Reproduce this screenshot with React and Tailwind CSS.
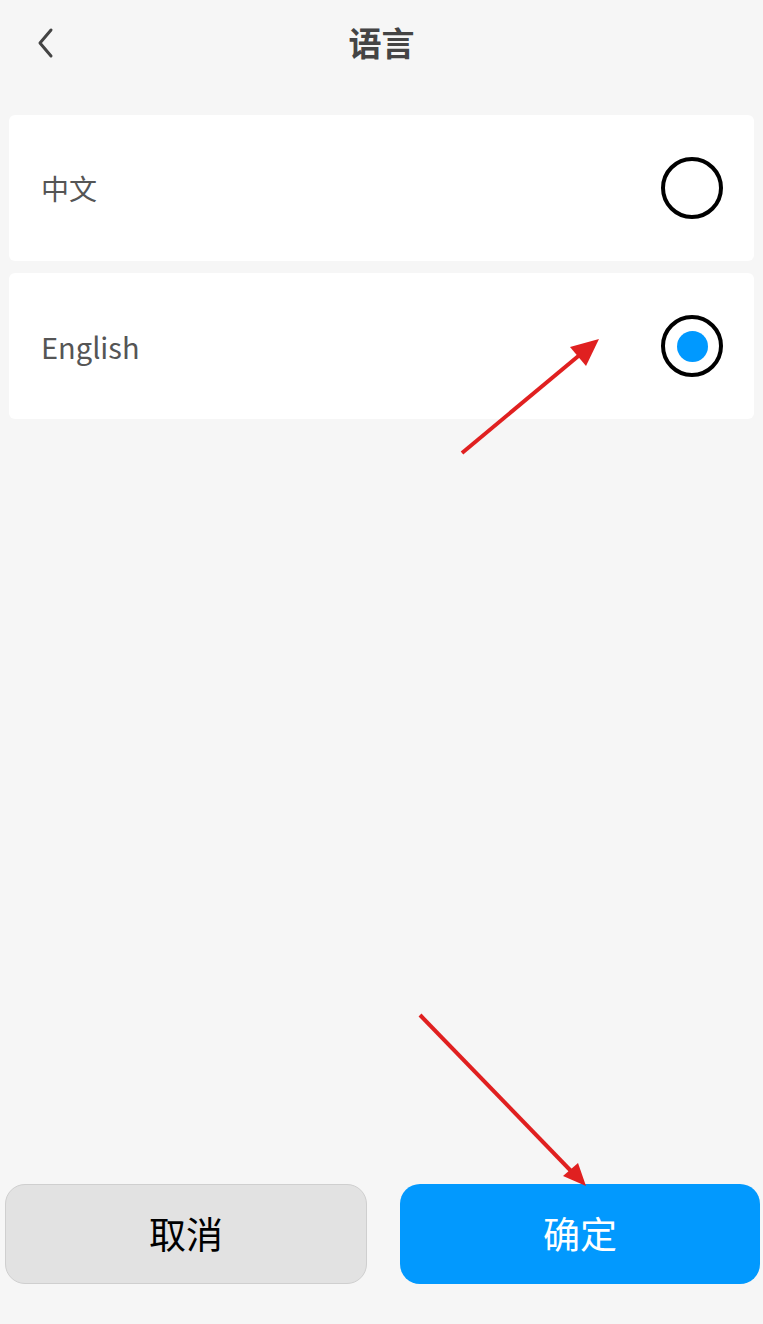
import { useState } from "react";

const font = { fontFamily: '"Noto Sans CJK SC", "Noto Sans", sans-serif' };

function Radio({ checked }) {
  return (
    <div className="w-[62px] h-[62px] rounded-full border-[4px] border-black flex items-center justify-center">
      {checked && <div className="w-[31px] h-[31px] rounded-full bg-[#0099ff]" />}
    </div>
  );
}

export default function App() {
  const [lang, setLang] = useState("en");

  const options = [
    { id: "zh", label: "中文", size: "text-[28px]" },
    { id: "en", label: "English", size: "text-[29px]" },
  ];

  return (
    <div
      className="relative w-[763px] h-[1324px] bg-[#f6f6f6] flex flex-col overflow-hidden"
      style={font}
    >
      <header className="relative h-[88px] flex items-center justify-center shrink-0 pb-[4px]">
        <button className="absolute left-[32px] top-[24px] w-[26px] h-[38px] flex items-center justify-center">
          <svg width="20" height="32" viewBox="0 0 20 32" fill="none">
            <path d="M16 3 L5 16 L16 29" stroke="#444" strokeWidth="3" strokeLinecap="round" strokeLinejoin="round" />
          </svg>
        </button>
        <h1 className="text-[33px] font-bold text-[#444] leading-none">语言</h1>
      </header>

      <div className="px-[9px] pt-[27px] flex flex-col gap-[12px]">
        {options.map((o) => (
          <div
            key={o.id}
            onClick={() => setLang(o.id)}
            className="h-[146px] bg-white rounded-[6px] flex items-center justify-between pl-[32px] pr-[31px]"
          >
            <span className={`${o.size} text-[#555] leading-none`}>{o.label}</span>
            <Radio checked={lang === o.id} />
          </div>
        ))}
      </div>

      <div className="flex-1" />

      <div className="flex gap-[33px] pl-[5px] pr-[3px] pb-[40px]">
        <button className="flex-1 h-[100px] rounded-[20px] bg-[#e2e2e2] border border-[#cfcfcf] text-[37px] text-black">
          取消
        </button>
        <button className="flex-1 h-[100px] rounded-[20px] bg-[#0299fe] text-[37px] text-white">
          确定
        </button>
      </div>

      <svg
        className="absolute inset-0 pointer-events-none"
        width="763"
        height="1324"
        viewBox="0 0 763 1324"
      >
        <line x1="462" y1="453" x2="582" y2="353" stroke="#e02020" strokeWidth="4" />
        <polygon points="599,339 570,347 586,366" fill="#e02020" />
        <line x1="420" y1="1015" x2="572" y2="1172" stroke="#e02020" strokeWidth="4" />
        <polygon points="586,1186 563,1176 578,1163" fill="#e02020" />
      </svg>
    </div>
  );
}
